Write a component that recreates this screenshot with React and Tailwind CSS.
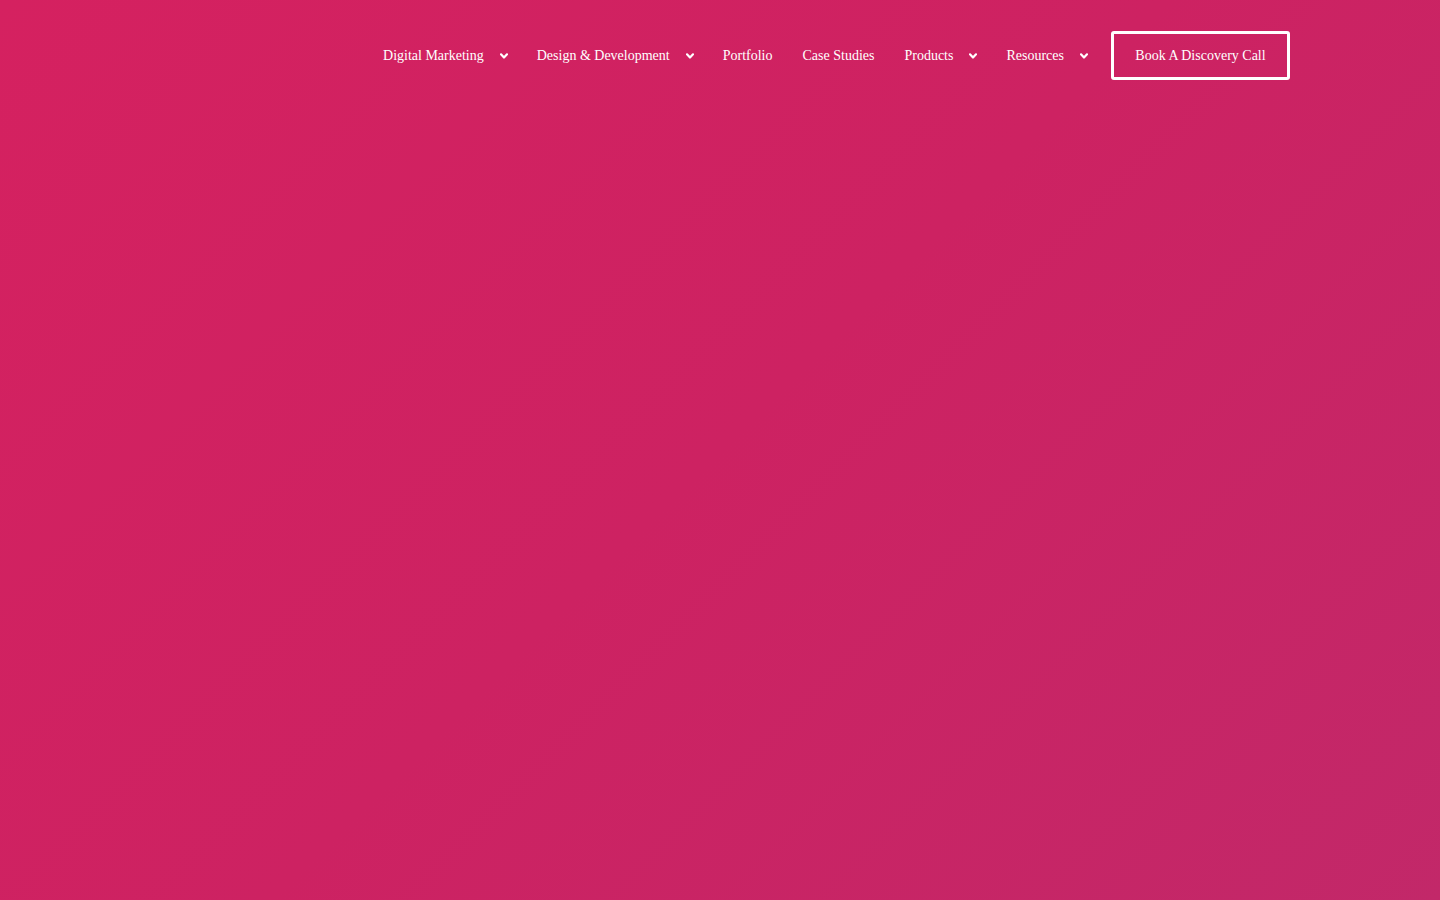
import React from "react";

function Chevron() {
  return (
    <svg width="8" height="6" viewBox="0 0 8 6" className="ml-4 mr-[-1px] mt-[1px]" aria-hidden="true">
      <path d="M1 1.3 L4 4.5 L7 1.3" fill="none" stroke="white" strokeWidth="2.2" strokeLinecap="round" strokeLinejoin="round" />
    </svg>
  );
}

const items = [
  { label: "Digital Marketing", dd: true },
  { label: "Design & Development", dd: true },
  { label: "Portfolio" },
  { label: "Case Studies" },
  { label: "Products", dd: true },
  { label: "Resources", dd: true },
];

export default function App() {
  return (
    <div
      className="w-full h-[900px] overflow-hidden bg-[linear-gradient(135deg,#d52160_0%,#cd2262_50%,#c22869_100%)]"
      style={{ fontFamily: '"Liberation Serif", "Times New Roman", serif' }}
    >
      <header className="flex items-center justify-end pr-[150px] pt-[31px]">
        <nav className="flex items-center text-white text-[14px]">
          {items.map((it) => (
            <a key={it.label} href="#" className="flex items-center px-[15px] whitespace-nowrap">
              <span>{it.label}</span>
              {it.dd && <Chevron />}
            </a>
          ))}
        </nav>
        <a
          href="#"
          className="ml-[9px] flex items-center justify-center w-[179px] h-[49px] border-[3px] border-white rounded-[3px] text-white text-[14px] whitespace-nowrap"
        >
          Book A Discovery Call
        </a>
      </header>
    </div>
  );
}
